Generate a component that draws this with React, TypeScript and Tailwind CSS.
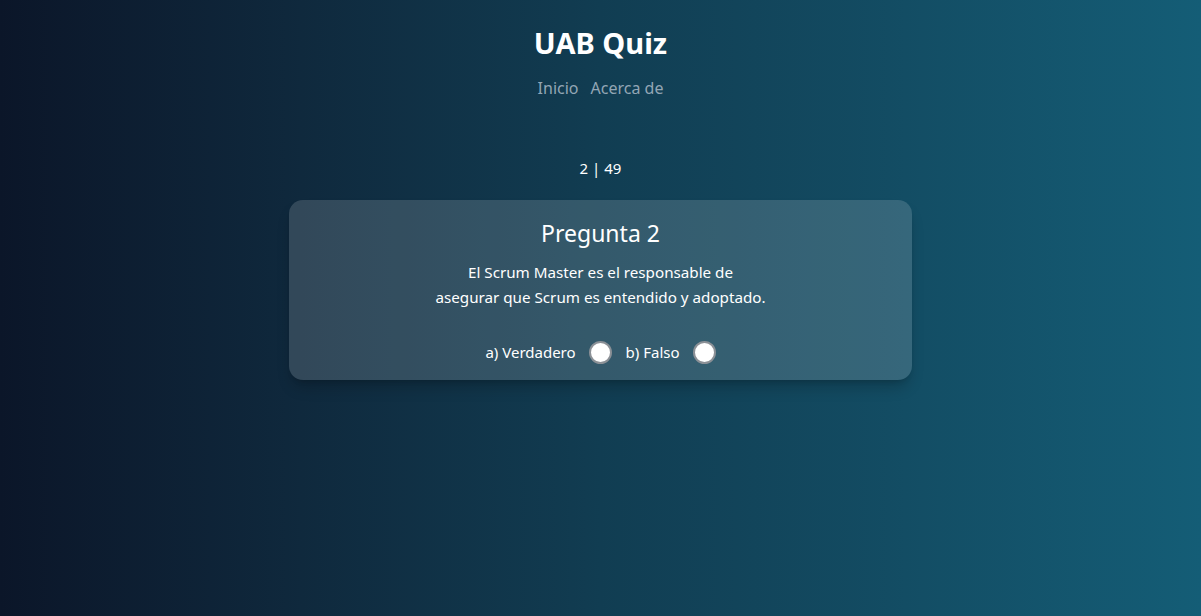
export default function App() {
  return (
    <div
      className="min-h-screen w-full bg-gradient-to-r from-[#0b1629] via-[#113d52] to-[#145d76] text-white"
      style={{ fontFamily: '"Noto Sans", "Open Sans", sans-serif' }}
    >
      <header className="flex flex-col items-center pt-[24px]">
        <h1 className="text-[29px] font-bold leading-[38px]">UAB Quiz</h1>
        <nav className="mt-[16px] flex gap-[12px] text-[16px] leading-[20px] text-[#93a6b5]">
          <a href="#">Inicio</a>
          <a href="#">Acerca de</a>
        </nav>
      </header>

      <main className="flex flex-col items-center">
        <p className="mt-[60px] text-[15px] leading-[20px]">2 | 49</p>

        <section className="mt-[22px] flex w-[623px] flex-col items-center rounded-[14px] bg-white/15 px-6 pb-[16px] pt-[18px] shadow-lg shadow-black/20">
          <h2 className="text-[23px] leading-[30px]">Pregunta 2</h2>
          <p className="mt-[12px] text-center text-[15.2px] leading-[25px]">
            El Scrum Master es el responsable de
            <br />
            asegurar que Scrum es entendido y adoptado.
          </p>
          <div className="mt-[31px] flex items-center text-[15px]">
            <label className="flex items-center gap-[13px]">
              a) Verdadero
              <span className="h-[23px] w-[23px] rounded-full border-2 border-[#8b9096] bg-white" />
            </label>
            <label className="ml-[14px] flex items-center gap-[13px]">
              b) Falso
              <span className="h-[23px] w-[23px] rounded-full border-2 border-[#8b9096] bg-white" />
            </label>
          </div>
        </section>
      </main>
    </div>
  );
}
